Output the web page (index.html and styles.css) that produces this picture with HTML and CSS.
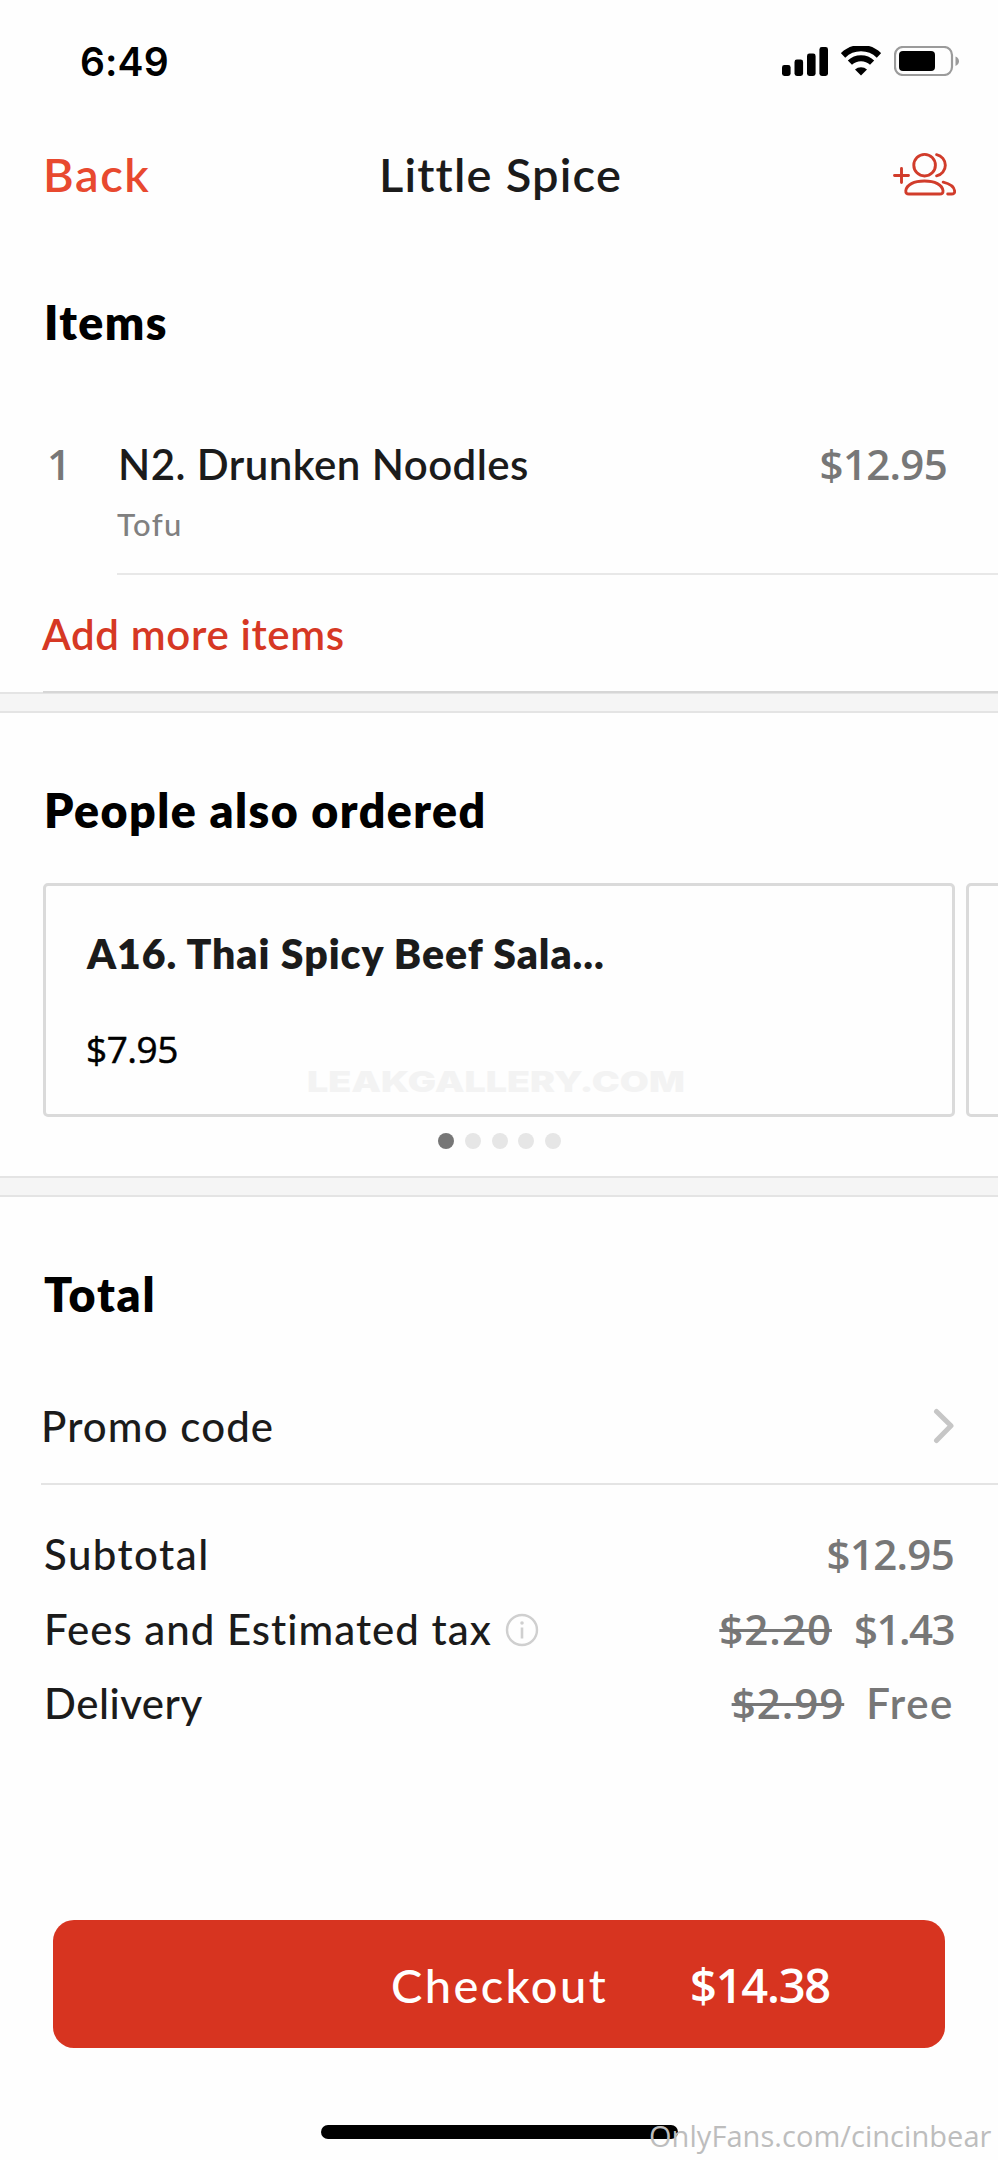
FILE: index.html
```
<!DOCTYPE html>
<html lang="en">
<head>
<meta charset="utf-8">
<title>Little Spice</title>
<link rel="stylesheet" href="styles.css">
</head>
<body>
<div class="screen">
  <header class="status">
    <span class="clock">6:49</span>
    <div class="indicators">
      <svg class="signal" viewBox="0 0 46 29" width="46" height="29">
        <rect x="0" y="18" width="8.6" height="11" rx="2.4"/>
        <rect x="12.5" y="12.5" width="8.6" height="16.5" rx="2.4"/>
        <rect x="25" y="6.5" width="8.6" height="22.5" rx="2.4"/>
        <rect x="37.4" y="0" width="8.6" height="29" rx="2.4"/>
      </svg>
      <svg class="wifi" viewBox="0 0 40 30" width="40" height="30">
        <path d="M2 9.400a26 26 0 0 1 36 0" fill="none" stroke="#000" stroke-width="6.400"/>
        <path d="M8.900 16.700a16 16 0 0 1 22.200 0" fill="none" stroke="#000" stroke-width="6"/>
        <path d="M20 29.600l-6-6a8.600 8.600 0 0 1 12 0z"/>
      </svg>
      <svg class="battery" viewBox="0 0 66 30" width="66" height="30">
        <rect x="1" y="1" width="57" height="28" rx="8" fill="none" stroke="#9b9b9b" stroke-width="2.200"/>
        <rect x="5" y="5" width="36" height="20" rx="4"/>
        <path d="M61.500 10.500q3.500 1.500 3.500 4.700t-3.500 4.700z" fill="#9b9b9b"/>
      </svg>
    </div>
  </header>

  <nav class="nav">
    <span class="back">Back</span>
    <span class="title">Little Spice</span>
    <svg class="group" viewBox="0 0 64 44" width="64" height="44">
      <path d="M2.500 23.500h14M9.500 16.500v14"/>
      <circle cx="32.600" cy="13.200" r="10.800"/>
      <path d="M44.600 2.600a10.800 10.800 0 0 1 0 21.200"/>
      <path d="M17 42H47.800c2.400 0 3.400-1.200 3.200-3.300C50.300 32.700 42.900 29 32.400 29S14.500 32.700 13.800 38.700c-.2 2.100.8 3.300 3.200 3.300z"/>
      <path d="M51.200 30.200c6.200 1.500 10.800 4.700 11.400 8.700.3 2-.8 3.100-3.100 3.100h-3.800"/>
    </svg>
  </nav>

  <h2 class="heading items-heading">Items</h2>
  <div class="item">
    <span class="qty">1</span>
    <div class="item-body">
      <div class="item-line"><span class="item-name">N2. Drunken Noodles</span><span class="money item-price">$12.95</span></div>
      <div class="option">Tofu</div>
    </div>
  </div>
  <div class="add"><span class="add-label">Add more items</span></div>
  <div class="band"></div>

  <section class="also">
    <h2 class="heading also-heading">People also ordered</h2>
    <div class="carousel">
      <article class="card">
        <div class="card-title">A16. Thai Spicy Beef Sala...</div>
        <div class="card-price">$7.95</div>
        <span class="site-mark">LEAKGALLERY.COM</span>
      </article>
      <article class="card"></article>
    </div>
    <div class="dots"><i class="dot on"></i><i class="dot"></i><i class="dot"></i><i class="dot"></i><i class="dot"></i></div>
  </section>
  <div class="band"></div>

  <h2 class="heading total-heading">Total</h2>
  <div class="promo">
    <span>Promo code</span>
    <svg viewBox="0 0 22 36" width="22" height="36"><path d="M3.500 3.500L18 17.800L3.500 32.500"/></svg>
  </div>
  <div class="summary">
    <div class="line"><span class="subtotal">Subtotal</span><span class="money">$12.95</span></div>
    <div class="line">
      <span class="fees">Fees and Estimated tax</span>
      <svg class="info" viewBox="0 0 34 34" width="34" height="34">
        <circle cx="17" cy="17" r="15" fill="none" stroke="#cfcfcf" stroke-width="2.400"/>
        <path d="M17 14.500v11" stroke="#cfcfcf" stroke-width="2.600"/>
        <circle cx="17" cy="10" r="1.800" fill="#cfcfcf"/>
      </svg>
      <s class="money was-fee">$2.20</s><span class="money fee">$1.43</span>
    </div>
    <div class="line"><span class="delivery">Delivery</span><s class="money was-delivery">$2.99</s><span class="money free">Free</span></div>
  </div>

  <button class="checkout"><span class="checkout-label">Checkout</span><span class="checkout-total">$14.38</span></button>
  <div class="home"></div>
  <span class="credit">OnlyFans.com/cincinbear</span>
</div>
</body>
</html>
```
FILE: styles.css
```
* { box-sizing: border-box; }
body { margin: 0; background: #fefefe; }
.screen {
  position: relative;
  width: 998px;
  height: 2160px;
  overflow: hidden;
  display: flex;
  flex-direction: column;
  font: 500 42px/50px Lato, sans-serif;
  color: #1b1b1b;
  white-space: nowrap;
}
.screen > * { flex: none; }

.status { height: 122px; padding: 0 38px 0 80px; display: flex; align-items: center; justify-content: space-between; }
.clock { padding-top: 1px; font: 600 39px/50px Inter, sans-serif; letter-spacing: .1px; color: #000; }
.indicators { display: flex; align-items: center; }
.wifi { margin: 0 13px 0 13px; }

.nav { height: 103px; padding: 1px 42px 0 43px; display: grid; grid-template-columns: 1fr auto 1fr; align-items: center; font-size: 47px; font-weight: 600; line-height: 60px; }
.back { color: #e8492f; letter-spacing: 1.6px; }
.title { padding-left: 2px; letter-spacing: 1.2px; }
.group { justify-self: end; fill: none; stroke: #d13c2b; stroke-width: 2.9; stroke-linecap: round; stroke-linejoin: round; }

.heading { margin: 0; font: 800 46.5px/60px Lato, sans-serif; color: #000; padding-left: 44px; }
.items-heading { height: 192px; padding-top: 67px; letter-spacing: 1.4px; }

.item { display: flex; height: 158px; }
.qty { width: 117px; padding: 22px 0 0 47px; font-family: "Open Sans", sans-serif; font-weight: 600; font-size: 42px; color: #777; }
.item-body { flex: 1; padding-top: 22px; border-bottom: 2px solid #e8e8e8; }
.item-line { display: flex; justify-content: space-between; padding: 0 51px 0 1px; }
.item-name { font-weight: 600; letter-spacing: .45px; }
.money { font-family: "Open Sans", sans-serif; font-weight: 600; color: #777; letter-spacing: -.7px; }
.option { margin-top: 15px; font-size: 31px; line-height: 40px; letter-spacing: 1.4px; color: #808080; }

.add { position: relative; z-index: 1; height: 118px; margin-left: 43px; padding-top: 2px; border-bottom: 2px solid #d6d6d6; display: flex; align-items: center; color: #d63824; font-weight: 600; letter-spacing: .65px; }
.add-label { margin-left: -1px; }
.band { height: 21px; background: #f5f5f5; border-top: 2px solid #e4e4e4; border-bottom: 2px solid #e4e4e4; }
.add + .band { margin-top: -1px; }

.also { height: 463px; }
.also-heading { height: 170px; padding-top: 67px; letter-spacing: 1.45px; }
.carousel { display: flex; gap: 11px; height: 234px; padding-left: 43px; overflow: hidden; }
.card { position: relative; flex: 0 0 912px; border: 3px solid #dadada; border-radius: 5px; padding: 43px 40px 0; }
.card-title { margin-left: 1px; font-size: 41px; font-weight: 800; letter-spacing: .95px; }
.card-price { margin-top: 50px; font: 500 37px/40px "Open Sans", sans-serif; -webkit-text-stroke: .5px #000; letter-spacing: -.5px; color: #000; }
.site-mark { position: absolute; left: 261px; top: 179px; font: 900 28px/34px Inter, sans-serif; color: #f3f3f3; transform: scaleX(1.34); transform-origin: 0 50%; }
.dots { display: flex; justify-content: center; gap: 10.9px; padding: 16px 0 0 1px; }
.dot { width: 16px; height: 16px; border-radius: 50%; background: #e6e6e6; }
.dot.on { background: #767676; }

.total-heading { height: 171px; padding-top: 67px; letter-spacing: 1.8px; }
.promo { height: 117px; margin-left: 41px; padding: 1px 43px 0 0; border-bottom: 2px solid #e4e4e4; display: flex; align-items: center; justify-content: space-between; letter-spacing: 1.1px; }
.promo svg { fill: none; stroke: #c6c6c6; stroke-width: 5; stroke-linecap: round; stroke-linejoin: round; }

.summary { padding: 32px 44px 0 44px; height: 435px; }
.line { height: 74.4px; display: flex; align-items: center; }
.line .money:last-child { margin-left: auto; }
.subtotal { letter-spacing: 1.45px; }
.fees { letter-spacing: 1px; }
.delivery { letter-spacing: .5px; }
.info { margin: 3px 0 0 13px; }
s.money { margin-left: auto; letter-spacing: 1px; text-decoration-thickness: 3px; }
.line .fee:last-child { margin-left: 22px; letter-spacing: -1.5px; }
.line .free:last-child { margin-left: 22px; font-family: Lato, sans-serif; letter-spacing: 1.6px; }

.checkout { display: flex; align-items: center; width: 892px; height: 128px; margin: 0 0 0 53px; padding: 1px 0 0 338px; border: 0; border-radius: 21px; background: #d73420; color: #fff; font: 500 47px/60px Lato, sans-serif; }
.checkout-label { width: 299px; text-align: left; letter-spacing: 2.4px; }
.checkout-total { font-family: "Open Sans", sans-serif; font-weight: 600; letter-spacing: -1.2px; }

.home { width: 357px; height: 14px; margin: 77px 0 0 321px; border-radius: 7px; background: #000; }
.credit { position: absolute; left: 649px; top: 2116px; font: 400 29px/40px "Open Sans", sans-serif; letter-spacing: .05px; color: #bdbdbd; }
```
